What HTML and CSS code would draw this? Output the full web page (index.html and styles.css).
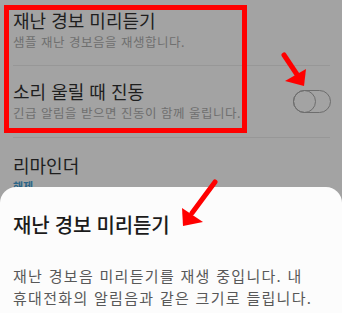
FILE: index.html
```html
<!DOCTYPE html>
<html lang="ko">
<head>
<meta charset="utf-8">
<link rel="stylesheet" href="styles.css">
</head>
<body>
<div class="screen">
  <div class="list">
    <div class="row">
      <div class="row-text">
        <div class="row-title">재난 경보 미리듣기</div>
        <div class="row-sub">샘플 재난 경보음을 재생합니다.</div>
      </div>
    </div>
    <div class="row row-toggle">
      <div class="row-text">
        <div class="row-title">소리 울릴 때 진동</div>
        <div class="row-sub">긴급 알림을 받으면 진동이 함께 울립니다.</div>
      </div>
      <div class="toggle"><span class="knob"></span></div>
    </div>
    <div class="row row-last">
      <div class="row-text">
        <div class="row-title">리마인더</div>
        <div class="row-sub blue">해제</div>
      </div>
    </div>
  </div>

  <div class="sheet">
    <div class="sheet-title">재난 경보 미리듣기</div>
    <p class="sheet-body">재난 경보음 미리듣기를 재생 중입니다. 내<br>휴대전화의 알림음과 같은 크기로 들립니다.</p>
  </div>

  <div class="highlight"></div>

  <svg class="arrows" width="342" height="313" viewBox="0 0 342 313">
    <line x1="284" y1="55" x2="298" y2="76" stroke="#f00" stroke-width="5" stroke-linecap="round"/>
    <polygon points="285,81 304,86 306,69" fill="#f00"/>
    <line x1="215" y1="182" x2="192" y2="213" stroke="#f00" stroke-width="5" stroke-linecap="round"/>
    <polygon points="182,208 183,226 203,222" fill="#f00"/>
  </svg>
</div>
</body>
</html>
```

FILE: styles.css
```css
* { box-sizing: border-box; }

html, body {
  margin: 0;
  padding: 0;
}

body {
  width: 342px;
  height: 313px;
  overflow: hidden;
  background: #a3a3a3;
  font-family: "Noto Sans CJK KR", "Noto Sans", sans-serif;
}

.screen {
  position: relative;
  width: 342px;
  height: 313px;
  overflow: hidden;
}

.list {
  padding: 0 12px 0 13px;
}

.row {
  display: flex;
  align-items: center;
  justify-content: space-between;
  height: 66px;
  border-bottom: 1px solid #979797;
}

.row-toggle {
  height: 72px;
}

.row-last {
  border-bottom: none;
  align-items: flex-start;
  padding-top: 15px;
}

.row-text {
  display: flex;
  flex-direction: column;
}

.row:first-child .row-text {
  margin-top: -6px;
}

.row-toggle .row-text {
  margin-top: -2px;
}

.row-title {
  font-size: 18px;
  line-height: 24px;
  color: #1e1e1e;
}

.row-sub {
  font-size: 12.5px;
  line-height: 18px;
  letter-spacing: 0.5px;
  color: #6f6f6f;
  margin-top: 1px;
}

.row-sub.blue {
  color: #2b6587;
  font-weight: 700;
  font-size: 11px;
  letter-spacing: 0;
  margin-top: 0;
}

.toggle {
  width: 38px;
  height: 23px;
  border: 1.5px solid #6d6d6d;
  border-radius: 12px;
  margin-right: -1px;
  position: relative;
}

.knob {
  position: absolute;
  left: -1.5px;
  top: -1.5px;
  width: 23px;
  height: 23px;
  border: 1.5px solid #6d6d6d;
  border-radius: 50%;
}

.sheet {
  position: absolute;
  left: 0;
  right: 0;
  top: 187px;
  bottom: -20px;
  background: #fcfcfc;
  border-radius: 16px 16px 0 0;
  padding: 24px 10px 0 13px;
}

.sheet-title {
  font-size: 20px;
  line-height: 28px;
  font-weight: 500;
  letter-spacing: -0.2px;
  color: #1b1b1b;
}

.sheet-body {
  margin: 26px 0 0;
  font-size: 15px;
  line-height: 22px;
  letter-spacing: 1.3px;
  color: #585858;
  white-space: nowrap;
}

.highlight {
  position: absolute;
  left: 4px;
  top: 5px;
  width: 243px;
  height: 128px;
  border: 5px solid #ff0000;
}

.arrows {
  position: absolute;
  left: 0;
  top: 0;
}
```
